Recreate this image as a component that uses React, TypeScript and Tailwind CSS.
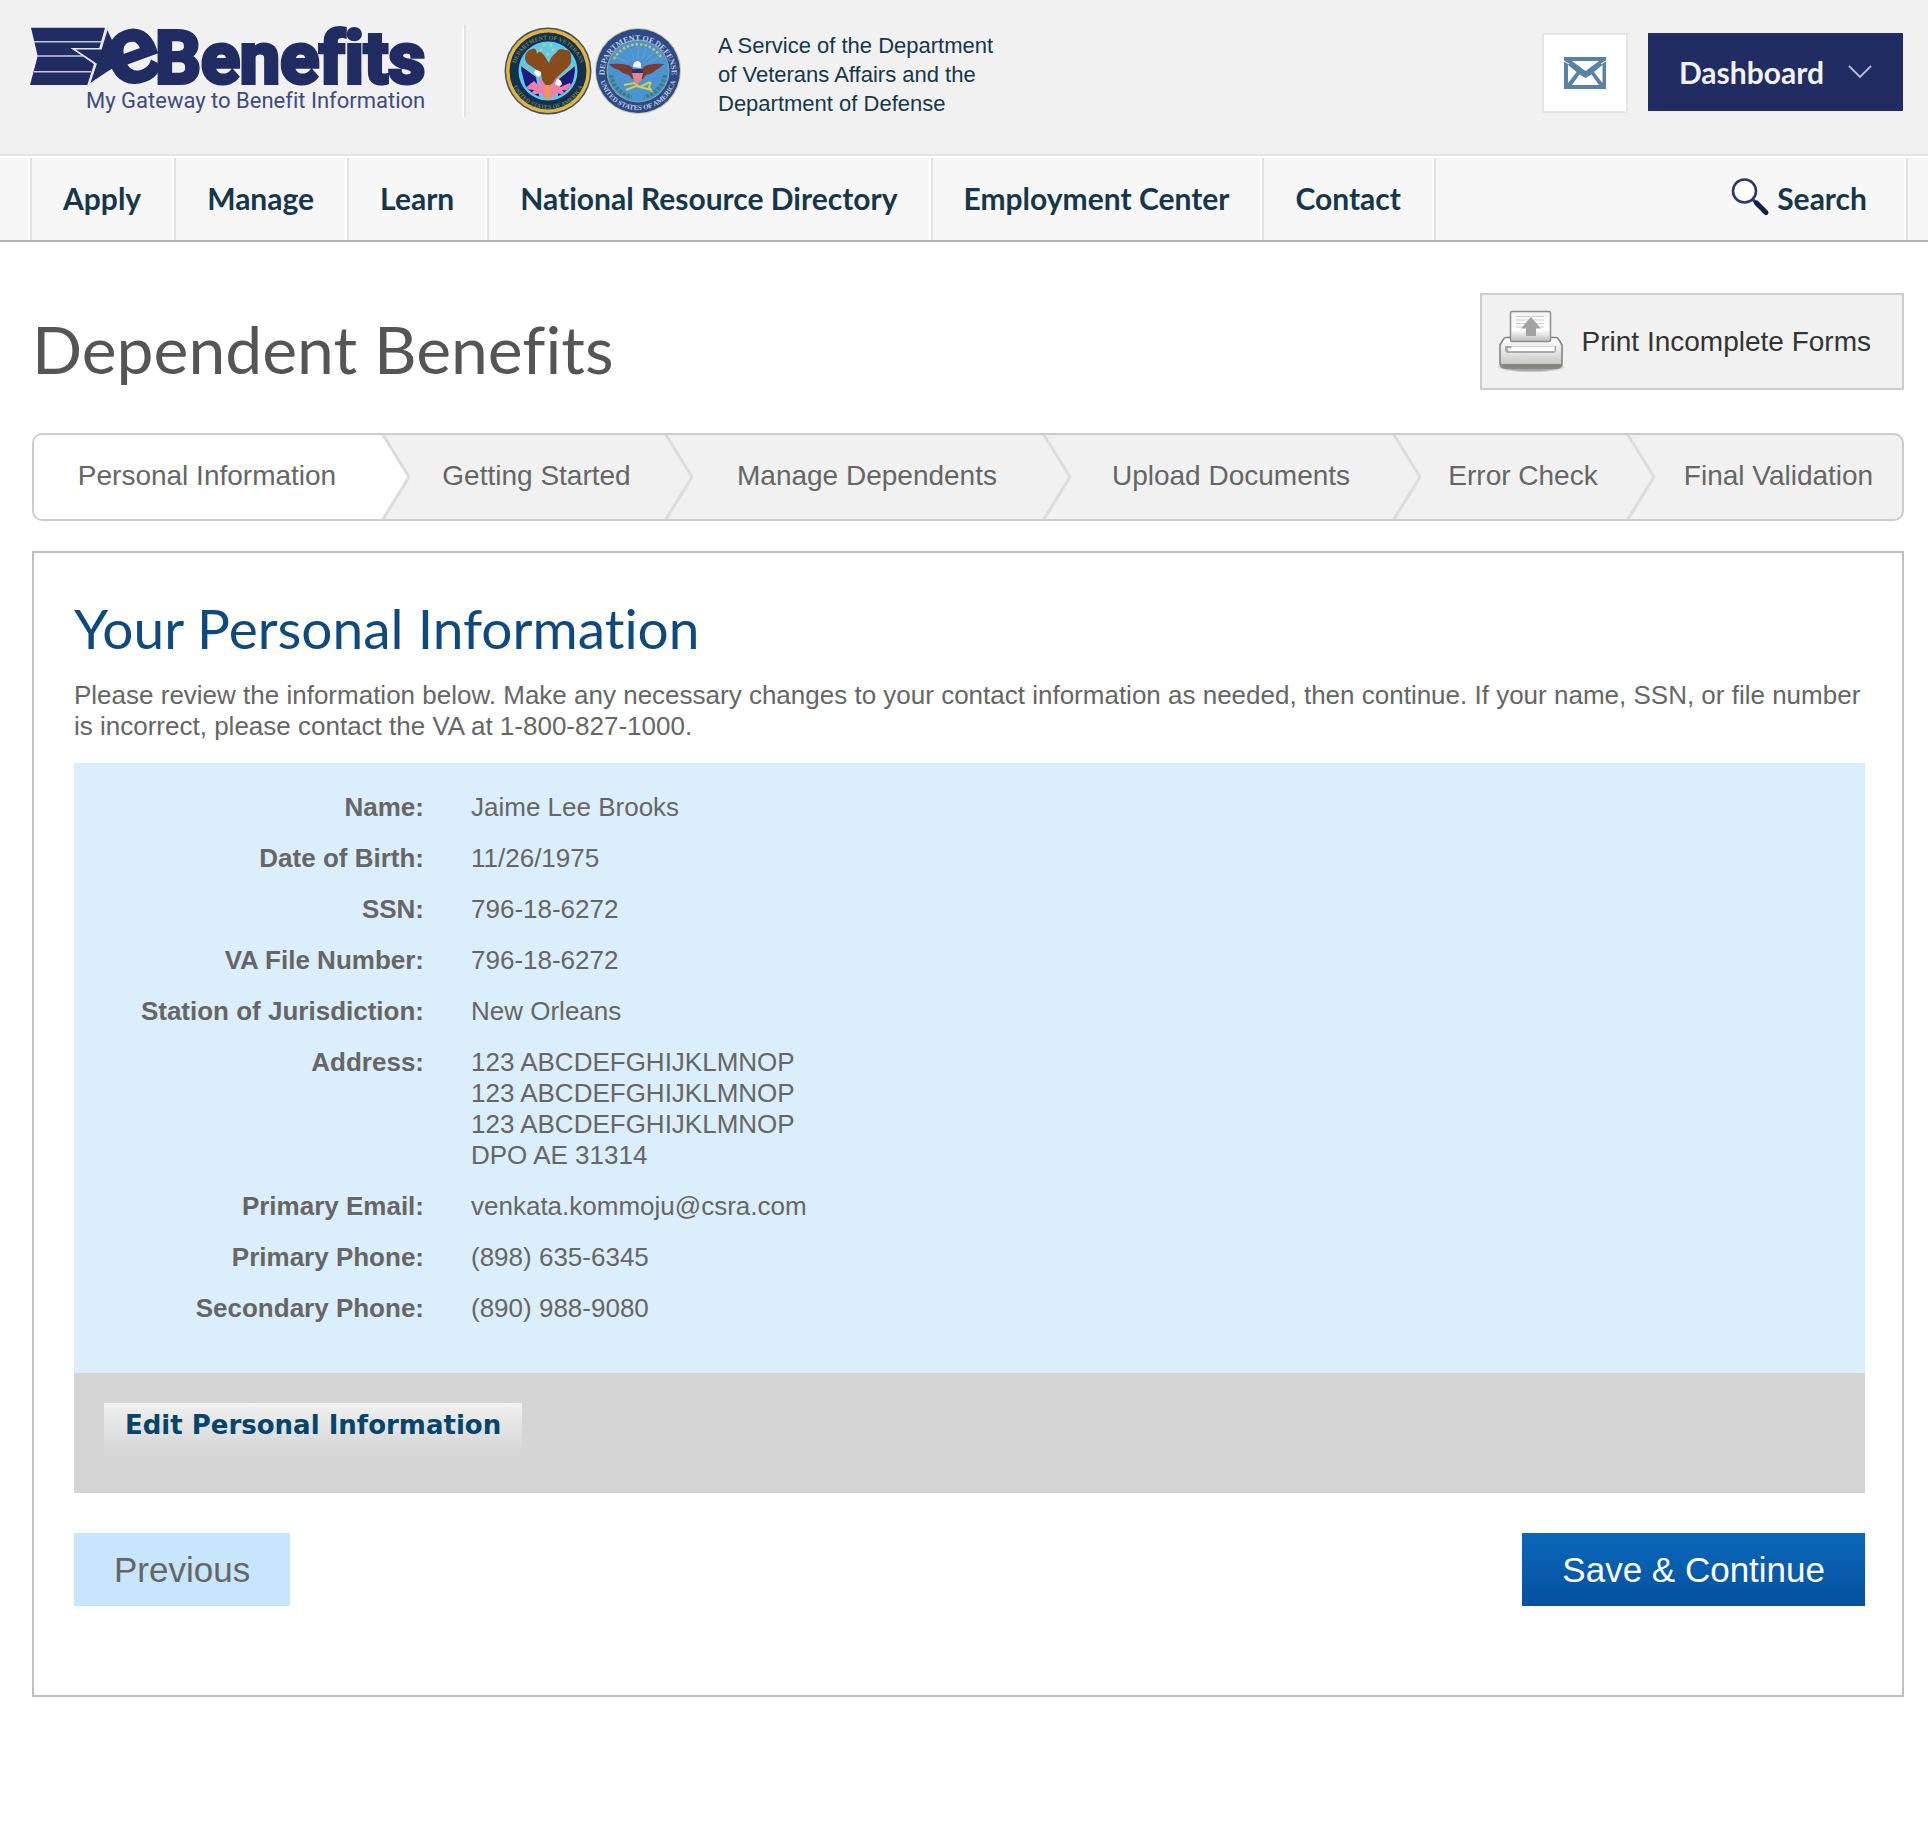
import React from "react";

const navItems = [
  "Apply",
  "Manage",
  "Learn",
  "National Resource Directory",
  "Employment Center",
  "Contact",
];

const steps = [
  "Personal Information",
  "Getting Started",
  "Manage Dependents",
  "Upload Documents",
  "Error Check",
  "Final Validation",
];

const details: { label: string; lines: string[] }[] = [
  { label: "Name:", lines: ["Jaime Lee Brooks"] },
  { label: "Date of Birth:", lines: ["11/26/1975"] },
  { label: "SSN:", lines: ["796-18-6272"] },
  { label: "VA File Number:", lines: ["796-18-6272"] },
  { label: "Station of Jurisdiction:", lines: ["New Orleans"] },
  {
    label: "Address:",
    lines: [
      "123 ABCDEFGHIJKLMNOP",
      "123 ABCDEFGHIJKLMNOP",
      "123 ABCDEFGHIJKLMNOP",
      "DPO AE 31314",
    ],
  },
  { label: "Primary Email:", lines: ["venkata.kommoju@csra.com"] },
  { label: "Primary Phone:", lines: ["(898) 635-6345"] },
  { label: "Secondary Phone:", lines: ["(890) 988-9080"] },
];

function Logo() {
  return (
    <svg
      viewBox="0 -25 400 129"
      className="h-[129px] w-[400px] shrink-0"
      role="img"
      aria-label="eBenefits, My Gateway to Benefit Information"
    >
      <path d="M1 2.700 H75 L69.300 23 H41 L64 39 L57.300 60 H0 L7.700 31 Z" fill="#212c62" />
      <path d="M4 16.700 H71 M7 31 H53 M4 46.700 H61" stroke="#c5c9dc" strokeWidth="1.600" />
      <path
        d="M77.500 2.700 L82 15 L92 24 L88 40 L77 46.700 L59 60 L66 39 L43 23.700 L71 23.700 Z"
        fill="#212c62"
        stroke="#e3e5ee"
        strokeWidth="1.500"
      />
      <path d="M78.500 8 L82 15 L92 24 L88 40 L77 46.700 L66 54 L72 28 Z" fill="#212c62" />
      <g fill="#212c62" stroke="#212c62" fontFamily="Roboto" fontWeight="700">
        <g transform="rotate(-20 102 32)">
          <text x="103" y="58" textAnchor="middle" fontSize="98" strokeWidth="2">
            e
          </text>
        </g>
        <text x="125" y="58" fontSize="72" strokeWidth="4">
          Benefits
        </text>
      </g>
      <text x="56" y="83" fontFamily="Roboto" fontSize="22" fill="#3f4a80">
        My Gateway to Benefit Information
      </text>
    </svg>
  );
}

function VeteransSeal() {
  return (
    <svg viewBox="0 0 88 88" className="size-[88px]" role="img" aria-label="Department of Veterans Affairs seal">
      <defs>
        <path id="va-top" d="M10.500 46 A33.500 33.500 0 1 1 77.500 46" />
        <path id="va-bottom" d="M6 44 A38 38 0 0 0 82 44" />
        <clipPath id="va-clip">
          <circle cx="44" cy="44" r="27" />
        </clipPath>
      </defs>
      <circle cx="44" cy="44" r="43.500" fill="#43506a" />
      <circle cx="44" cy="44" r="42" fill="#e2b33d" />
      <circle cx="44" cy="44" r="38.500" fill="#14304a" />
      <circle cx="44" cy="44" r="30" fill="#1e3a5a" />
      <g fontFamily="Liberation Serif" fontSize="6" fontWeight="700" fill="#6d8062">
        <text>
          <textPath href="#va-top" startOffset="50%" textAnchor="middle">
            DEPARTMENT OF VETERANS
          </textPath>
        </text>
        <text>
          <textPath href="#va-bottom" startOffset="50%" textAnchor="middle">
            UNITED STATES OF AMERICA
          </textPath>
        </text>
      </g>
      <circle cx="44" cy="44" r="29.500" fill="#5cc9f2" />
      <g clipPath="url(#va-clip)">
        <path d="M16 38 L32 50 L36 74 L22 62 Z" fill="#1d1a80" />
        <path d="M72 38 L54 52 L54 70 L68 62 Z" fill="#1d1a80" />
        <path d="M20 62 L30 54 L36 60 L34 50 L42 58 L48 58 L54 48 L56 60 L66 56 L70 64 L58 63 L62 68 L52 66 L50 72 L38 72 L38 66 L26 68 L30 63 Z" fill="#f27fa8" />
        <path d="M17 38 L34 50" stroke="#9dc77a" strokeWidth="1.500" />
        <path d="M71 38 L54 52" stroke="#9dc77a" strokeWidth="1.500" />
      </g>
      <path
        d="M21 31 Q21 24 28 22 Q32 20 33 27 Q35 22 40 28 Q43 33 45 36 Q47 29 52 26 Q55 20 61 23 Q68 22 67 32 Q68 37 62 42 L52 51 L49 56 L43 60 L38 53 L37 46 L27 39 Q21 36 21 31 Z"
        fill="#8a4b1c"
      />
      <path d="M33 43 Q30 43 30 46 L34 50 Q38 48 37 45 Z" fill="#fff" />
      <path d="M53 52 Q57 52 58 57 Q56 61 51 57 Z" fill="#fff" />
      <path d="M42 58 L45 58 L46 72 L41 72 Z" fill="#e6a13a" />
      <g fill="#c8d64a">
        <circle cx="40" cy="18" r="1.500" />
        <circle cx="47" cy="18" r="1.500" />
        <circle cx="37" cy="23" r="1.500" />
        <circle cx="49" cy="23" r="1.500" />
        <circle cx="43.500" cy="27" r="1.500" />
      </g>
    </svg>
  );
}

function DefenseSeal() {
  return (
    <svg viewBox="0 0 88 88" className="size-[88px]" role="img" aria-label="Department of Defense seal">
      <defs>
        <path id="dod-top" d="M10.500 47 A33.500 33.500 0 1 1 77.500 47" />
        <path id="dod-bottom" d="M5 44 A39 39 0 0 0 83 44" />
      </defs>
      <circle cx="44" cy="44" r="43" fill="#c9c9a0" />
      <circle cx="44" cy="44" r="42" fill="#2b4a86" />
      <circle cx="44" cy="44" r="31.500" fill="#8fa3a5" />
      <circle cx="44" cy="44" r="30.500" fill="#4a94d2" />
      <g fontFamily="Liberation Serif" fontSize="8" fontWeight="700" fill="#c3cde2">
        <text>
          <textPath href="#dod-top" startOffset="50%" textAnchor="middle">
            DEPARTMENT OF DEFENSE
          </textPath>
        </text>
        <text fontSize="7">
          <textPath href="#dod-bottom" startOffset="50%" textAnchor="middle">
            UNITED STATES OF AMERICA
          </textPath>
        </text>
      </g>
      <g stroke="#6aa5cc" strokeWidth="0.800">
        <path d="M44 32 V20 M40 32 L36 21 M48 32 L52 21 M36 33 L28 24 M52 33 L60 24 M33 35 L22 30 M55 35 L66 30" />
      </g>
      <path d="M20 32 A27 27 0 0 1 68 32" fill="none" stroke="#bcc860" strokeWidth="2.500" strokeDasharray="2.500 2" />
      <path d="M17 48 A27 27 0 0 0 38 70" fill="none" stroke="#3b7f7a" strokeWidth="4" strokeDasharray="3 1.500" />
      <path d="M71 48 A27 27 0 0 1 50 70" fill="none" stroke="#3b7f7a" strokeWidth="4" strokeDasharray="3 1.500" />
      <path
        d="M15 37 Q26 36 34 38 Q38 39 39 43 L48 43 Q49 39 54 38 Q62 36 70 37 Q66 41 62 43 Q58 47 52 48 L49 52 L38 52 L35 48 Q29 47 25 43 Q19 42 15 37 Z"
        fill="#7a3b33"
      />
      <path d="M39 40 Q39 34 44 34 Q48 35 47 41 Z" fill="#f4f4f4" />
      <path d="M38 42 H49 V46 H38 Z" fill="#27356e" />
      <path d="M38 46 H49 L47 54 L43.500 57 L40 54 Z" fill="#e9808e" />
      <path d="M30 58 L40 56 L46 60 L56 55 M32 63 L42 59 L50 61 L58 63 M57 55 L55 60 L58 65" fill="none" stroke="#d9cc52" strokeWidth="2" />
    </svg>
  );
}

function EnvelopeIcon() {
  return (
    <svg viewBox="0 0 42 32" className="h-8 w-[42px]" aria-hidden="true">
      <rect width="42" height="32" fill="#5b82a3" />
      <path d="M8 4 H35 L21.500 14 Z" fill="#fff" />
      <path d="M4 8 L12.500 15 L4 26 Z" fill="#fff" />
      <path d="M38.500 8 L30 15 L38.500 26 Z" fill="#fff" />
      <path d="M8 28 L15.500 17.500 L21.500 21 L27.500 17.500 L35 28 Z" fill="#fff" />
      <path d="M0 4 L5 7 M42 4 L37 7" stroke="#fff" strokeWidth="1" />
    </svg>
  );
}

function SearchIcon() {
  return (
    <svg viewBox="0 0 40 40" className="size-10" aria-hidden="true">
      <circle cx="14.500" cy="13" r="11.500" fill="#fff" stroke="#2a3a66" strokeWidth="2.600" />
      <path d="M22.500 21 L26 25" stroke="#2a3a66" strokeWidth="3" />
      <path d="M26.500 25 L36 34.500" stroke="#0d1f4a" strokeWidth="5" strokeLinecap="round" />
    </svg>
  );
}

function PrinterIcon() {
  return (
    <svg viewBox="0 0 70 64" className="h-16 w-[70px] shrink-0" aria-hidden="true">
      <defs>
        <linearGradient id="printer-body" x1="0" y1="0" x2="0" y2="1">
          <stop offset="0" stopColor="#ffffff" />
          <stop offset="0.500" stopColor="#e4e4e4" />
          <stop offset="1" stopColor="#bcbcba" />
        </linearGradient>
        <linearGradient id="printer-paper" x1="0" y1="0" x2="0" y2="1">
          <stop offset="0" stopColor="#f4f4f4" />
          <stop offset="0.600" stopColor="#ffffff" />
          <stop offset="1" stopColor="#bdbdbd" />
        </linearGradient>
        <radialGradient id="printer-shadow">
          <stop offset="0.700" stopColor="#a8a8a8" />
          <stop offset="1" stopColor="#f1f1f1" />
        </radialGradient>
      </defs>
      <ellipse cx="35" cy="57" rx="35" ry="5.500" fill="url(#printer-shadow)" />
      <path
        d="M10 27.500 H60 Q62 27.500 63 30 L66 35 V53 Q66 58 61 58 H9 Q4 58 4 53 V35 L7 30 Q8 27.500 10 27.500 Z"
        fill="url(#printer-body)"
        stroke="#838381"
        strokeWidth="1.600"
      />
      <path d="M5 54 H65 Q64 58.500 60 58.500 H10 Q6 58.500 5 54 Z" fill="#86887f" />
      <rect x="14.500" y="1.500" width="40" height="30" rx="1.500" fill="url(#printer-paper)" stroke="#8f8f8f" strokeWidth="1.500" />
      <path d="M20 6.500 H48 M20 10 H48 M20 13.500 H48 M20 17 H48" stroke="#cfcfcf" strokeWidth="1.200" />
      <path d="M35 7 L45 18.500 H40 V26 H30 V18.500 H25 Z" fill="#a3a3a3" />
      <path d="M9 36 H60 V40 Q60 43 57 43 H12 Q9 43 9 40 Z" fill="#a9a9a7" />
      <path d="M16 36.500 H58.500 V41 H14 Z" fill="#ffffff" />
      <circle cx="13.500" cy="39.500" r="1.800" fill="#eeeeee" />
    </svg>
  );
}

function StepArrow({ active }: { active: boolean }) {
  return (
    <svg viewBox="0 0 30 84" className="h-[84px] w-[30px] shrink-0" aria-hidden="true">
      <path d="M0 0 H2 L28 42 L2 84 H0 Z" fill={active ? "#ffffff" : "#f1f1f1"} />
      <path d="M2 0 H30 V84 H2 L28 42 Z" fill="#f1f1f1" />
      <path d="M3 0 L29 42 L3 84" fill="none" stroke="#dcdcdc" strokeWidth="3" />
    </svg>
  );
}

export default function App() {
  return (
    <div className="min-h-screen bg-white font-['Liberation_Sans',Arial,sans-serif] text-[#666666] [font-variant-ligatures:none]">
      <header className="flex h-[156px] items-start justify-between border-b-2 border-[#e5e5e5] bg-[#f1f1f1] pr-[25px] pl-[30px] text-[#16374b]">
        <div className="flex items-start">
          <a href="#home">
            <Logo />
          </a>
          <div className="mt-[25px] ml-8 h-[92px] border-l-2 border-white">
            <div className="h-full border-l-2 border-[#e2e2e2]" />
          </div>
          <div className="mt-[27px] ml-[38px] flex gap-[2px]">
            <VeteransSeal />
            <DefenseSeal />
          </div>
          <p className="ml-9 pt-[31px] text-[22px] leading-[29px]">
            A Service of the Department
            <br />
            of Veterans Affairs and the
            <br />
            Department of Defense
          </p>
        </div>
        <div className="flex gap-5 pt-[33px]">
          <a
            href="#messages"
            aria-label="Messages"
            className="flex h-20 w-[86px] items-center justify-center border-2 border-[#e5e5e5] bg-white"
          >
            <EnvelopeIcon />
          </a>
          <button
            type="button"
            className="flex h-[78px] items-center gap-6 bg-[#212c62] px-[31px] font-['Lato',sans-serif] text-[30px] leading-9 font-bold text-[#f1f1f1]"
          >
            Dashboard
            <svg viewBox="0 0 24 14" className="h-[14px] w-6" aria-hidden="true">
              <path d="M1 1 L12 12 L23 1" fill="none" stroke="#b9bdd0" strokeWidth="1.800" />
            </svg>
          </button>
        </div>
      </header>

      <nav
        aria-label="Main"
        className="flex h-[86px] items-stretch border-t-2 border-b-2 border-t-white border-b-[#b5b5b5] bg-[#f7f7f7] pr-5 pl-[28px] font-['Lato',sans-serif] text-[30px] leading-9 font-bold text-[#16374b]"
      >
        <ul className="flex border-l-2 border-white">
          {navItems.map((item) => (
            <li key={item} className="flex border-r-2 border-l-2 border-r-white border-l-[#e2e2e2]">
              <a href="#nav" className="flex items-center px-[31px] pb-[2px]">
                {item}
              </a>
            </li>
          ))}
        </ul>
        <div className="flex flex-1 justify-end border-r-2 border-l-2 border-[#e2e2e2]">
          <a href="#search" className="flex items-center gap-[7px] border-r-2 border-white pr-[37px] pb-[2px]">
            <SearchIcon />
            Search
          </a>
        </div>
      </nav>

      <main className="pr-6 pl-8">
        <div className="flex items-start justify-between pt-[51px]">
          <h1 className="pt-[13px] font-['Lato',sans-serif] text-[66px] leading-[86px] text-[#555555]">
            Dependent Benefits
          </h1>
          <button
            type="button"
            className="flex h-[97px] items-center gap-4 border-2 border-[#cccccc] bg-[#f1f1f1] pr-[31px] pl-[14px] text-[28px] leading-8 text-[#333333]"
          >
            <PrinterIcon />
            Print Incomplete Forms
          </button>
        </div>

        <ol className="mt-[41px] grid grid-cols-[376fr_283fr_378fr_350fr_234fr_247fr] overflow-hidden rounded-[10px] border-2 border-[#cccccc] bg-[#f1f1f1] text-[28px] leading-8">
          {steps.map((step, index) => (
            <li key={step} className={index === 0 ? "flex bg-white" : "flex"}>
              <a
                href="#step"
                aria-current={index === 0 ? "step" : undefined}
                className="flex flex-1 items-center justify-center pb-[2px] whitespace-nowrap"
              >
                {step}
              </a>
              {index < steps.length - 1 && <StepArrow active={index === 0} />}
            </li>
          ))}
        </ol>

        <section className="mt-[30px] border-2 border-[#bfbfbf] pt-[39px] pr-[37px] pb-[89px] pl-10">
          <h2 className="font-['Lato',sans-serif] text-[55px] leading-[72px] text-[#104a7d]">
            Your Personal Information
          </h2>
          <p className="mt-4 text-[26px] leading-[31px]">
            Please review the information below. Make any necessary changes to your contact information as needed, then
            continue. If your name, SSN, or file number is incorrect, please contact the VA at 1-800-827-1000.
          </p>
          <dl className="mt-[21px] flex flex-col gap-5 bg-[#dbeefc] pt-[29px] pb-[49px] text-[26px] leading-[31px]">
            {details.map(({ label, lines }) => (
              <div key={label} className="flex gap-[47px]">
                <dt className="w-[350px] shrink-0 text-right font-bold">{label}</dt>
                <dd>
                  {lines.map((line, index) => (
                    <div key={index}>{line}</div>
                  ))}
                </dd>
              </div>
            ))}
          </dl>
          <div className="h-[120px] bg-[#d5d5d5] px-[30px] pt-[30px]">
            <button
              type="button"
              className="flex h-[50px] items-start bg-linear-to-b from-[#f1f1f1] to-[#d5d5d5] px-[21px] pt-[6px] font-['DejaVu_Sans',Verdana,sans-serif] text-[26px] leading-8 font-bold text-[#04466b]"
            >
              Edit Personal Information
            </button>
          </div>
          <div className="mt-10 flex justify-between text-[35px] leading-[73px]">
            <button type="button" className="bg-[#c7e5fb] px-10">
              Previous
            </button>
            <button type="button" className="bg-linear-to-b from-[#0a68b9] to-[#0650a0] px-10 text-white">
              Save &amp; Continue
            </button>
          </div>
        </section>
      </main>
    </div>
  );
}
